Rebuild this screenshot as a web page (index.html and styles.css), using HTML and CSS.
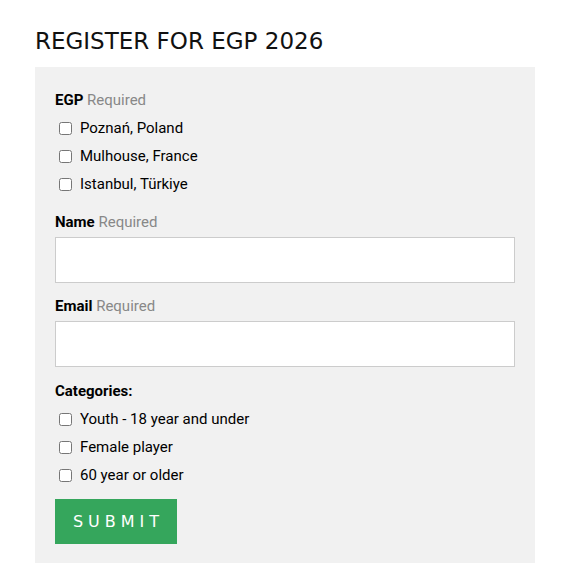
FILE: index.html
```html
<!DOCTYPE html>
<html lang="en">

<head>
    <meta charset="UTF-8">
    <meta name="viewport" content="width=device-width, initial-scale=1.0">
    <title>Register for EGP 2026</title>
    <link rel="stylesheet" href="styles.css">
</head>

<body>
    <main class="page">
        <h1 class="title">REGISTER FOR EGP 2026</h1>

        <form class="signup">
            <fieldset class="group">
                <legend class="label"><b>EGP</b> <span class="req">Required</span></legend>
                <label class="check"><input type="checkbox"> Poznań, Poland</label>
                <label class="check"><input type="checkbox"> Mulhouse, France</label>
                <label class="check"><input type="checkbox"> Istanbul, Türkiye</label>
            </fieldset>

            <div class="field">
                <label class="label" for="name"><b>Name</b> <span class="req">Required</span></label>
                <input class="text" type="text" id="name">
            </div>

            <div class="field">
                <label class="label" for="email"><b>Email</b> <span class="req">Required</span></label>
                <input class="text" type="email" id="email">
            </div>

            <fieldset class="group categories">
                <legend class="label"><b>Categories:</b></legend>
                <label class="check"><input type="checkbox"> Youth - 18 year and under</label>
                <label class="check"><input type="checkbox"> Female player</label>
                <label class="check"><input type="checkbox"> 60 year or older</label>
            </fieldset>

            <button class="submit" type="submit">SUBMIT</button>
        </form>
    </main>
</body>

</html>
```

FILE: styles.css
```css
body {
    margin: 0;
    padding: 0;
    font-family: Roboto, "Liberation Sans", sans-serif;
    font-size: 15px;
    color: #000;
    background-color: #fff;
}

.page {
    width: 500px;
    padding: 24px 0 0 35px;
}

.title {
    font-family: "DejaVu Sans", sans-serif;
    font-weight: normal;
    font-size: 23px;
    line-height: 34px;
    margin: 0 0 9px;
    color: #111;
}

.signup {
    background-color: #f1f1f1;
    padding: 22px 20px 19px;
}

.group {
    border: 0;
    margin: 0 0 13px;
    padding: 0;
}

.categories {
    margin-top: 13px;
    margin-bottom: 10px;
}

.label {
    display: block;
    padding: 0;
    line-height: 22px;
    margin-bottom: 3px;
}

.label b {
    font-weight: bold;
}

.req {
    color: #888;
}

.check {
    display: flex;
    align-items: center;
    height: 28px;
    padding-left: 4px;
}

.check input {
    width: 13px;
    height: 13px;
    margin: 0 8px 0 0;
}

.field {
    margin-bottom: 12px;
}

.field .label {
    margin-bottom: 4px;
}

.text {
    display: block;
    box-sizing: border-box;
    width: 100%;
    height: 46px;
    border: 1px solid #ccc;
    background: #fff;
    margin: 0;
}

.submit {
    display: block;
    width: 122px;
    height: 45px;
    border: 0;
    background-color: #35a65c;
    color: #fff;
    font-family: "DejaVu Sans", sans-serif;
    font-size: 16px;
    letter-spacing: 5px;
    padding: 0 0 0 5px;
}
```
